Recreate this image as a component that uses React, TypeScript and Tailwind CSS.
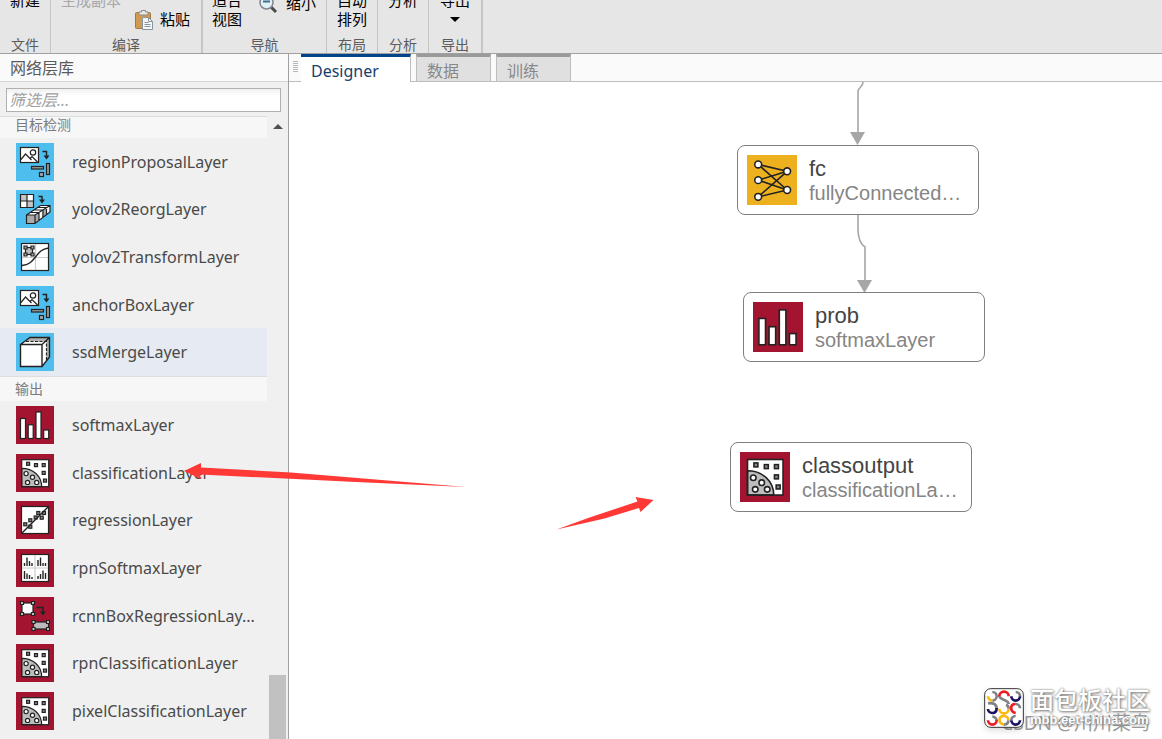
import type { ReactNode } from 'react';

const INK = '#222222';

function Tile({ color, children }: { color: string; children: ReactNode }) {
  return (
    <svg viewBox="0 0 38 38" className="size-full" fill="none" strokeWidth="1.2" aria-hidden="true">
      <rect width="38" height="38" fill={color} />
      {children}
    </svg>
  );
}

const BLUE = '#4dbeee';
const RED = '#a2142f';
const YELLOW = '#edb120';

function ProposalIcon() {
  return (
    <Tile color={BLUE}>
      <rect x="4.5" y="4.5" width="18" height="15" fill="#fff" stroke={INK} />
      <path d="M5 16.5l4.500-5.500 6 6M14 15.500l2-2 5.500 5.500" stroke={INK} />
      <circle cx="17" cy="9.5" r="2.7" stroke={INK} />
      <path d="M26.5 8.5h4v6" stroke={INK} strokeWidth="1.4" />
      <path d="M27.500 12.5h6l-3 4z" fill={INK} />
      <rect x="15.5" y="23.5" width="12" height="2.500" fill="#999" stroke={INK} />
      <rect x="30.5" y="20.5" width="3" height="11" fill="#999" stroke={INK} />
      <rect x="23.5" y="29.5" width="4" height="4" fill="#aaa" stroke={INK} />
    </Tile>
  );
}

function ReorgIcon() {
  return (
    <Tile color={BLUE}>
      <path d="M4.5 4.5h13v13h-13z" fill="#fff" />
      <path d="M4.5 4.5H11V11H4.5zM11 11h6.5v6.5H11z" fill="#c4c4c4" />
      <path d="M4.5 4.5h13v13h-13zM11 4.5v13M4.5 11h13" stroke={INK} />
      <path d="M22.5 6.5H26v5" stroke={INK} strokeWidth="1.4" />
      <path d="M23 9.5h6l-3 4z" fill={INK} />
      <path d="M10.5 25l14-9.5H34V22L19 33.5h-8.5z" fill="#fff" />
      <path d="M10.500 25H19v8.500h-8.500zM19 25l4-3v8.500l-4 3zM26.500 20l3.500-2.500V25l-3.500 3z" fill="#aaa" />
      <path d="M10.500 25l14-9.500H34V22L19 33.500h-8.500zM10.500 25H19l15-9.500M19 25v8.500M14 22.500h9v8M18 20h9v7.500M21.500 17.500h9V25" stroke={INK} />
    </Tile>
  );
}

function TransformIcon() {
  return (
    <Tile color={BLUE}>
      <rect x="5.5" y="5.5" width="27" height="27" fill="#fff" />
      <path d="M19.5 6v26M6 19.5h26" stroke="#ccc" />
      <rect x="9.5" y="9.5" width="7" height="7" fill="#bbb" stroke={INK} />
      <path d="M8 8h3v3H8zM15 8h3v3h-3zM8 15h3v3H8zM15 15h3v3h-3z" fill="#aaa" stroke={INK} />
      <path d="M6 27.5c7-.5 10-4 13.5-8.500s6-8 13-9" stroke={INK} strokeWidth="1.4" />
      <rect x="5.5" y="5.5" width="27" height="27" stroke={INK} />
    </Tile>
  );
}

function MergeIcon() {
  return (
    <Tile color={BLUE}>
      <path d="M4.5 11.5l9.5-7h19.5V24L26 33.5H4.5z" fill="#fff" />
      <path d="M14 4.5h19.5V24l-3 3.500v-19H9z" fill="#b0b0b0" />
      <path d="M4.5 11.5H26v22H4.5zM4.5 11.5l9.5-7h19.5V24L26 33.5M26 11.5l7.5-7" stroke={INK} strokeWidth="1.4" />
      <path d="M10 8.5h20.5v19" stroke={INK} strokeDasharray="3 1.5" />
    </Tile>
  );
}

function SoftmaxIcon() {
  return (
    <Tile color={RED}>
      <g fill="#fff" stroke={INK}>
        <rect x="4.500" y="12.500" width="5" height="20" />
        <rect x="12.200" y="18.800" width="5" height="13.700" />
        <rect x="20" y="6" width="5" height="26.500" />
        <rect x="27.700" y="24" width="5" height="8.500" />
      </g>
    </Tile>
  );
}

const classSquares = [[12.1, 9.8], [20, 11.1], [27.7, 11.1], [27.7, 18.9], [29, 26.6]];
const classCircles = [[10.1, 19.6], [16.5, 23.3], [11.6, 28.4], [20.7, 28.4]];

function ClassificationIcon() {
  return (
    <Tile color={RED}>
      <rect x="5.7" y="5.7" width="27" height="27" fill="#fff" />
      <path d="M5.7 14.3C17 14.3 25.5 22 25.7 32.7h-20z" fill="#bdbdbd" stroke={INK} />
      {classSquares.map(([x, y]) => (
        <rect key={`${x}-${y}`} x={x - 1.5} y={y - 1.5} width="3" height="3" fill="#888" stroke={INK} />
      ))}
      {classCircles.map(([x, y]) => (
        <circle key={`${x}-${y}`} cx={x} cy={y} r="2.1" fill="#fff" stroke={INK} />
      ))}
      <rect x="5.7" y="5.7" width="27" height="27" stroke={INK} />
    </Tile>
  );
}

const regressionPoints = [[9.3, 23.3], [14.3, 19.3], [14.3, 25.7], [19.7, 16.5], [22.3, 12], [25.7, 16.7], [28, 12]];

function RegressionIcon() {
  return (
    <Tile color={RED}>
      <rect x="5.5" y="5.5" width="27" height="27" fill="#fff" stroke={INK} />
      {regressionPoints.map(([x, y]) => (
        <rect key={`${x}-${y}`} x={x - 1.5} y={y - 1.5} width="3" height="3" fill="#888" stroke={INK} />
      ))}
      <path d="M5.5 32.5l27-27" stroke={INK} strokeWidth="1.4" />
    </Tile>
  );
}

function RpnSoftmaxIcon() {
  return (
    <Tile color={RED}>
      <rect x="5.5" y="5.5" width="27" height="27" fill="#fff" stroke={INK} />
      <path d="M19 6v26M6 19h26" stroke="#ccc" />
      <path
        d="M8.5 17v-3M11 17V8.5M13.5 17v-5M16 17v-3M22 17v-6M24.5 17V8.5M27 17v-3M29.5 17v-3M8.5 30v-8M11 30v-5.5M13.5 30v-4M16 30v-2M22 30v-3M24.5 30v-5M27 30v-8.5M29.5 30v-6"
        stroke={INK}
        strokeWidth="1.4"
      />
    </Tile>
  );
}

function RcnnIcon() {
  return (
    <Tile color={RED}>
      <rect x="6" y="6" width="11" height="11" fill="#fff" stroke={INK} />
      <path d="M4.5 4.5h3v3h-3zM15.5 4.5h3v3h-3zM4.5 15.5h3v3h-3zM15.5 15.5h3v3h-3z" fill="#ccc" stroke={INK} />
      <path d="M20.5 10.5H27v5" stroke={INK} strokeWidth="1.4" />
      <path d="M24 14.5h6l-3 4z" fill={INK} />
      <rect x="17.5" y="25" width="15" height="7" fill="#bbb" stroke={INK} />
      <path d="M16 23.5h3v3h-3zM30.5 23.5h3v3h-3zM16 30.5h3v3h-3zM30.5 30.5h3v3h-3z" fill="#ccc" stroke={INK} />
    </Tile>
  );
}

function FullyConnectedIcon() {
  return (
    <Tile color={YELLOW}>
      <path
        d="M8.5 7.2l22 5.2M8.5 7.2l22 19.4M8.5 19.1l22-6.7M8.5 19.1l22 7.5M8.5 31.8l22-19.4M8.5 31.8l22-5.2"
        stroke={INK}
      />
      <g fill="#fff" stroke={INK}>
        <circle cx="8.5" cy="7.2" r="2.6" />
        <circle cx="8.5" cy="19.1" r="2.6" />
        <circle cx="8.5" cy="31.8" r="2.6" />
        <circle cx="30.5" cy="12.4" r="2.6" />
        <circle cx="30.5" cy="26.6" r="2.6" />
      </g>
    </Tile>
  );
}

function PasteIcon() {
  return (
    <svg viewBox="0 0 20 20" className="size-5" fill="none" aria-hidden="true">
      <rect x="1.5" y="2.5" width="15" height="16" rx="1" fill="#d09a50" stroke="#a8763a" />
      <path d="M5 5V2h2.5V.5h4V2H14v3z" fill="#e8e8e8" stroke="#8b8b8b" />
      <path d="M8.5 7.5h6l4 4v8h-10z" fill="#f4f7fa" stroke="#8795a1" />
      <path d="M14.5 7.5v4h4M10.5 12.5h4M10.5 14.5h6M10.5 16.5h6" stroke="#8795a1" />
    </svg>
  );
}

function ZoomOutIcon() {
  return (
    <svg viewBox="0 0 20 20" className="size-5" fill="none" aria-hidden="true">
      <path d="M12 12l6 6" stroke="#4a4a4a" strokeWidth="3" />
      <circle cx="8.5" cy="8.5" r="6.5" fill="#e2f0f5" stroke="#7d868c" strokeWidth="1.5" />
      <path d="M5 7.500h7" stroke="#3b6f96" strokeWidth="2" />
    </svg>
  );
}

const groups = [
  {
    title: '目标检测',
    head: 'h-[22px]',
    rows: 'h-[238px] grid-rows-5',
    layers: [
      { name: 'regionProposalLayer', icon: ProposalIcon },
      { name: 'yolov2ReorgLayer', icon: ReorgIcon },
      { name: 'yolov2TransformLayer', icon: TransformIcon },
      { name: 'anchorBoxLayer', icon: ProposalIcon },
      { name: 'ssdMergeLayer', icon: MergeIcon, active: true },
    ],
  },
  {
    title: '输出',
    head: 'h-[25px] pt-1',
    rows: 'h-[334px] grid-rows-7',
    layers: [
      { name: 'softmaxLayer', icon: SoftmaxIcon },
      { name: 'classificationLayer', icon: ClassificationIcon },
      { name: 'regressionLayer', icon: RegressionIcon },
      { name: 'rpnSoftmaxLayer', icon: RpnSoftmaxIcon },
      { name: 'rcnnBoxRegressionLay...', icon: RcnnIcon },
      { name: 'rpnClassificationLayer', icon: ClassificationIcon },
      { name: 'pixelClassificationLayer', icon: ClassificationIcon },
    ],
  },
];

const nodes = [
  { name: 'fc', type: 'fullyConnected…', icon: FullyConnectedIcon, place: 'left-[448px] top-[63px]' },
  { name: 'prob', type: 'softmaxLayer', icon: SoftmaxIcon, place: 'left-[454px] top-[210px]' },
  { name: 'classoutput', type: 'classificationLa…', icon: ClassificationIcon, place: 'left-[441px] top-[360px]' },
];

function ToolGroup({ label, className, children }: { label: string; className: string; children: ReactNode }) {
  return (
    <section className={`flex shrink-0 flex-col justify-end border-[#c6c6c6] ${className}`}>
      <div className="mb-2 flex shrink-0 items-end text-[15px] leading-[19px] text-black">{children}</div>
      <h2 className="shrink-0 text-center text-[14px] leading-4 text-[#5c5c5c]">{label}</h2>
    </section>
  );
}

function Toolbar() {
  return (
    <header className="flex h-[54px] shrink-0 overflow-hidden border-b border-[#a0a0a0] bg-[#e6e6e6]">
      <ToolGroup label="文件" className="w-[51px] border-r">
        <button className="mx-auto mb-[19px]">新建</button>
      </ToolGroup>
      <ToolGroup label="编译" className="w-[152px] border-r-2">
        <div className="flex flex-col px-[10px]">
          <button className="self-start text-[#a8a8a8]" disabled>生成副本</button>
          <button className="ml-[73px] flex h-[19px] items-center gap-[6px] whitespace-nowrap">
            <PasteIcon />
            粘贴
          </button>
        </div>
      </ToolGroup>
      <ToolGroup label="导航" className="w-[124px] border-r">
        <button className="ml-[9px] w-[30px]">适合视图</button>
        <button className="mb-4 ml-4 flex h-[19px] items-center gap-2 whitespace-nowrap">
          <ZoomOutIcon />
          缩小
        </button>
      </ToolGroup>
      <ToolGroup label="布局" className="w-[51px] border-r">
        <button className="mx-auto w-[30px]">自动排列</button>
      </ToolGroup>
      <ToolGroup label="分析" className="w-[51px] border-r">
        <button className="mx-auto mb-[19px]">分析</button>
      </ToolGroup>
      <ToolGroup label="导出" className="w-[54px] border-r-2">
        <button className="mx-auto flex flex-col items-center">
          导出
          <span className="flex h-[19px] items-center">
            <svg viewBox="0 0 10 5" className="h-[5px] w-[10px]" aria-hidden="true">
              <path d="M0 0h10L5 5z" />
            </svg>
          </span>
        </button>
      </ToolGroup>
    </header>
  );
}

function Library() {
  return (
    <aside className="flex w-[289px] shrink-0 flex-col overflow-hidden border-r border-[#a0a0a0] bg-[#f0f0f0]">
      <h1 className="flex h-7 shrink-0 items-center border-b border-[#d4d4d4] bg-[#fafafa] px-[10px] text-[16px] text-[#5a5a5a]">
        网络层库
      </h1>
      <div className="shrink-0 px-[6px] pt-[6px] pb-1">
        <input
          type="text"
          aria-label="筛选层"
          placeholder="筛选层..."
          className="block h-6 w-[275px] border border-[#b0b0b0] bg-linear-to-b from-[#f0f0f0] to-white to-30% px-[2px] text-[16px] italic outline-none placeholder:text-[#a0a0a0]"
        />
      </div>
      <div className="flex min-h-0 flex-1">
        <div className="min-w-0 flex-1 overflow-hidden">
          {groups.map((group) => (
            <section key={group.title}>
              <h2 className={`border-t border-[#dedede] bg-[#f7f7f7] px-[15px] text-[14px] leading-4 text-[#7c7c7c] ${group.head}`}>
                {group.title}
              </h2>
              <ul className={`grid ${group.rows}`}>
                {group.layers.map(({ name, icon: Icon, active }: { name: string; icon: () => ReactNode; active?: boolean }) => (
                  <li key={name} className={`flex items-center gap-[18px] pl-4 ${active ? 'bg-[#e6eaf2]' : ''}`}>
                    <span className="size-[38px] shrink-0">
                      <Icon />
                    </span>
                    <span className="text-[16px] whitespace-nowrap text-[#4a4a4a]">{name}</span>
                  </li>
                ))}
              </ul>
            </section>
          ))}
        </div>
        <div className="flex w-[21px] shrink-0 flex-col items-center justify-between">
          <svg viewBox="0 0 10 5" className="mt-2 h-[5px] w-[10px]" fill="#505050" aria-hidden="true">
            <path d="M0 5h10L5 0z" />
          </svg>
          <div className="h-16 w-[17px] bg-[#c1c1c1]" />
        </div>
      </div>
    </aside>
  );
}

function Tabs() {
  return (
    <nav className="flex h-7 shrink-0 bg-[#fafafa] text-[16px]">
      <div className="flex w-3 items-start justify-center border-b border-[#bdbdbd] pt-[7px]">
        <svg viewBox="0 0 5 12" className="h-3 w-[5px]" stroke="#b8b8b8" aria-hidden="true">
          <path d="M0 .5h5M0 2.5h5M0 4.5h5M0 6.5h5M0 8.5h5M0 10.5h5" />
        </svg>
      </div>
      <button className="flex w-[110px] items-center border-t-[3px] border-r border-t-[#004489] border-r-[#bdbdbd] bg-white px-[10px] pt-[2px] text-[#17406d]">
        Designer
      </button>
      <div className="w-[5px] border-b border-[#bdbdbd]" />
      <button className="flex w-[75px] items-center border border-t-[3px] border-[#bdbdbd] border-t-[#9a9a9a] bg-[#e0e0e0] px-[10px] pt-1 text-[#888]">
        数据
      </button>
      <div className="w-[5px] border-b border-[#bdbdbd]" />
      <button className="flex w-[75px] items-center border border-t-[3px] border-[#bdbdbd] border-t-[#9a9a9a] bg-[#e0e0e0] px-[10px] pt-1 text-[#888]">
        训练
      </button>
      <div className="flex-1 border-b border-[#bdbdbd]" />
    </nav>
  );
}

function Canvas() {
  return (
    <div className="relative min-h-0 flex-1 overflow-hidden bg-white font-['Liberation_Sans',sans-serif]">
      <svg width="700" height="300" className="absolute top-0 left-0" fill="none" stroke="#a6a6a6" strokeWidth="1.6" aria-hidden="true">
        <path d="M574 0c0 5-4 5-5 9v42M569 133v14c0 12 4 16 7 18v33" />
        <path d="M561 50h15l-7.5 13zM568 198h15l-7.5 13z" fill="#a6a6a6" stroke="none" />
      </svg>
      {nodes.map(({ name, type, icon: Icon, place }) => (
        <div
          key={name}
          className={`absolute flex h-[70px] w-[242px] items-center gap-3 rounded-lg border border-[#7f7f7f] bg-white pl-[9px] ${place}`}
        >
          <div className="size-[50px] shrink-0">
            <Icon />
          </div>
          <div className="pt-[2px] leading-6 whitespace-nowrap">
            <p className="text-[22px] text-[#444]">{name}</p>
            <p className="text-[20px] text-[#858585]">{type}</p>
          </div>
        </div>
      ))}
    </div>
  );
}

function Watermark() {
  return (
    <div className="pointer-events-none absolute right-2 bottom-2 flex h-[46px] w-[170px] items-center gap-[6px]">
      <p className="absolute right-1 -bottom-1 text-[19px] leading-6 whitespace-nowrap text-[#9a9a9a]">CSDN @川川菜鸟</p>
      <svg viewBox="0 0 120 120" className="relative size-10 shrink-0 drop-shadow-md" fill="none" strokeWidth="8" aria-hidden="true">
        <rect x="2" y="2" width="116" height="116" rx="18" fill="#fff" stroke="#333" strokeWidth="3" />
        <g stroke="#808285">
          <path d="M25 38a13 13 0 0 0 0-26M46 24c0 12 28 10 28 24M95 12a13 13 0 0 1 13 13" />
          <path d="M12 46c12-2 26 0 26 16M74 62a13 13 0 0 0-8-12M95 48a13 13 0 0 1 13 13M25 86a13 13 0 0 1 13 13M73 97c0 8-5 13-13 13M82 97a13 13 0 0 1 13-13" />
        </g>
        <path d="M12 25a13 13 0 0 0 13 13M46 62a14 14 0 0 0 28 0M60 110c-18-4-18-26 0-26a13 13 0 0 1 13 13" stroke="#fdb913" />
        <path d="M46 25a14 14 0 0 1 28 0M95 75c-18-4-18-27 0-27M12 97a13 13 0 0 0 26 0" stroke="#ed1c24" />
        <path d="M82 25a13 13 0 0 0 26 0M38 60c0 10-6 15-13 15s-13-5-13-12M82 97a13 13 0 0 0 26 0" stroke="#1b1464" />
      </svg>
      <div className="relative whitespace-nowrap text-white [text-shadow:0_0_2px_#777,1px_1px_3px_#777]">
        <p className="text-[24px] leading-6 font-medium">面包板社区</p>
        <p className="font-['Liberation_Sans',sans-serif] text-[13px] leading-4 font-bold">mbb.eet-china.com</p>
      </div>
    </div>
  );
}

function Annotations() {
  return (
    <svg width="700" height="560" className="pointer-events-none absolute top-0 left-0" fill="#ff3936" aria-hidden="true">
      <path d="M184 471l17-8v4.5l90 5 175 14.5-110-5-156-7.5 1 4.5z" />
      <path d="M653.5 500l-18-3 2 4.5-48 16-33 12 48-11 34.5-10.5 1.5 4z" />
    </svg>
  );
}

export default function App() {
  return (
    <div className="relative flex h-screen flex-col overflow-hidden bg-white font-['Noto_Sans','Noto_Sans_CJK_SC',sans-serif]">
      <Toolbar />
      <div className="flex min-h-0 flex-1">
        <Library />
        <main className="flex min-w-0 flex-1 flex-col">
          <Tabs />
          <Canvas />
        </main>
      </div>
      <Annotations />
      <Watermark />
    </div>
  );
}
